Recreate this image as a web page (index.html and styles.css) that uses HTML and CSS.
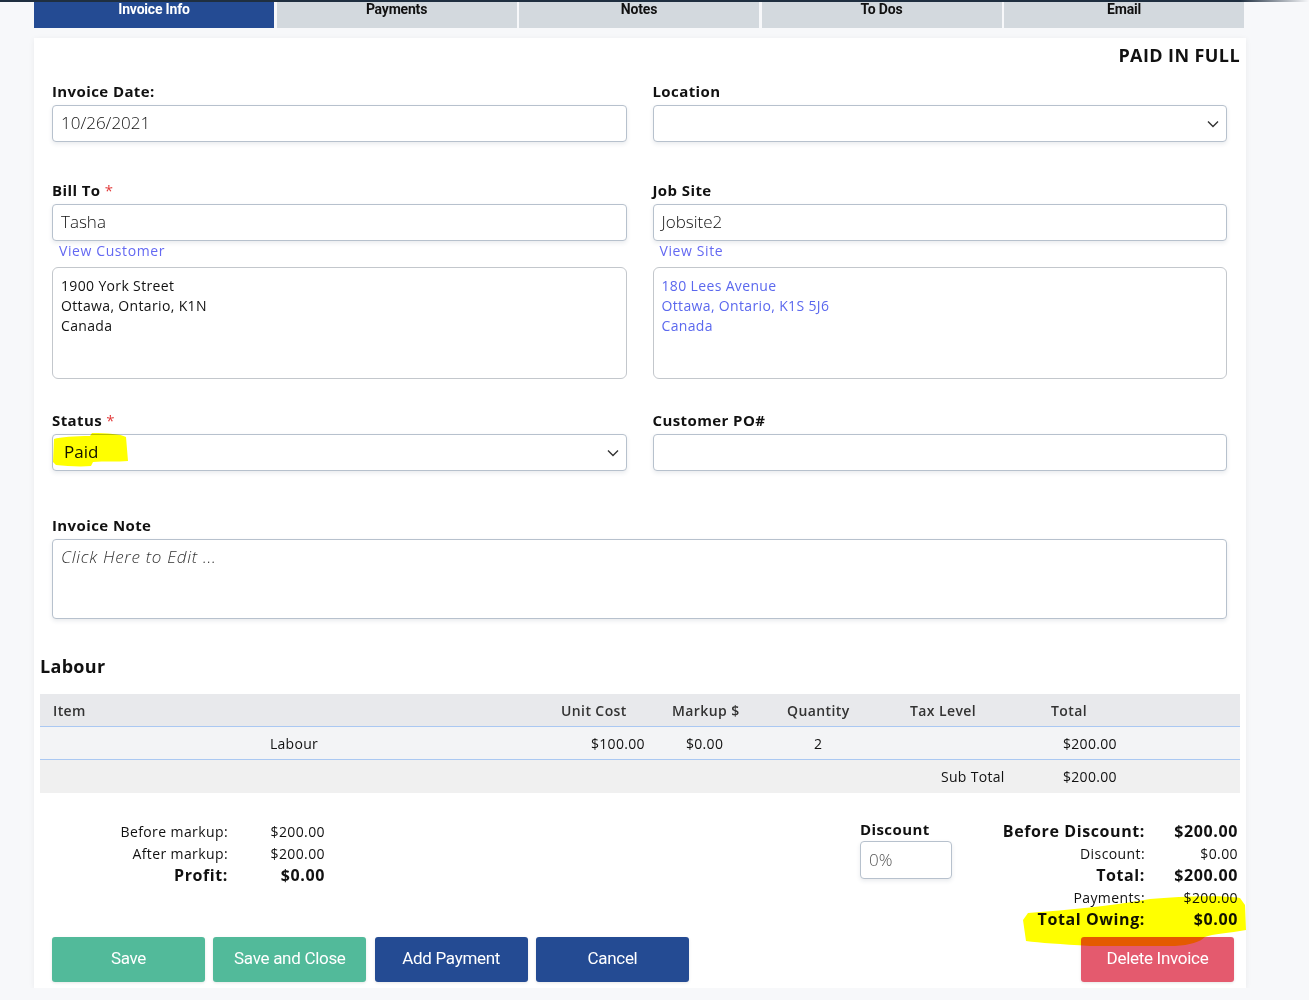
FILE: index.html
```html
<!DOCTYPE html>
<html>
<head>
<meta charset="utf-8">
<title>Invoice</title>
<link rel="stylesheet" href="styles.css">
</head>
<body>
<div class="topbar"></div>
<nav class="tabs">
  <div class="tab active">Invoice Info</div>
  <div class="tab">Payments</div>
  <div class="tab">Notes</div>
  <div class="tab">To Dos</div>
  <div class="tab">Email</div>
</nav>
<main class="card">
  <div class="paid">PAID IN FULL</div>
  <div class="form">
    <div class="row r1">
      <div class="field">
        <div class="lbl">Invoice Date:</div>
        <div class="input">10/26/2021</div>
      </div>
      <div class="field">
        <div class="lbl">Location</div>
        <div class="input select"><span></span><svg class="chev" width="12" height="8" viewBox="0 0 12 8"><path d="M1 1.5 L6 6.5 L11 1.5" fill="none" stroke="#333" stroke-width="1.4"/></svg></div>
      </div>
    </div>
    <div class="row r2">
      <div class="field">
        <div class="lbl">Bill To <span class="req">*</span></div>
        <div class="input">Tasha</div>
        <div class="link">View Customer</div>
        <div class="addr">1900 York Street<br>Ottawa, Ontario, K1N<br>Canada</div>
      </div>
      <div class="field">
        <div class="lbl">Job Site</div>
        <div class="input">Jobsite2</div>
        <div class="link">View Site</div>
        <div class="addr blue">180 Lees Avenue<br>Ottawa, Ontario, K1S 5J6<br>Canada</div>
      </div>
    </div>
    <div class="row r3">
      <div class="field">
        <div class="lbl">Status <span class="req">*</span></div>
        <div class="input select status"><span>Paid</span><svg class="chev" width="12" height="8" viewBox="0 0 12 8"><path d="M1 1.5 L6 6.5 L11 1.5" fill="none" stroke="#333" stroke-width="1.4"/></svg></div>
      </div>
      <div class="field">
        <div class="lbl">Customer PO#</div>
        <div class="input"></div>
      </div>
    </div>
    <div class="row single r4">
      <div class="field">
        <div class="lbl">Invoice Note</div>
        <div class="input note">Click Here to Edit ...</div>
      </div>
    </div>
  </div>

  <h2 class="section">Labour</h2>
  <div class="table">
    <div class="tr th">
      <div class="c">Item</div>
      <div class="c">Unit Cost</div>
      <div class="c">Markup $</div>
      <div class="c">Quantity</div>
      <div class="c">Tax Level</div>
      <div class="c">Total</div>
      <div class="c"></div>
    </div>
    <div class="tr td">
      <div class="c center">Labour</div>
      <div class="c p43">$100.00</div>
      <div class="c p27">$0.00</div>
      <div class="c p40">2</div>
      <div class="c"></div>
      <div class="c p25">$200.00</div>
      <div class="c"></div>
    </div>
    <div class="tr sub">
      <div class="c"></div>
      <div class="c"></div>
      <div class="c"></div>
      <div class="c"></div>
      <div class="c p44">Sub Total</div>
      <div class="c p25">$200.00</div>
      <div class="c"></div>
    </div>
  </div>

  <div class="summary">
    <div class="markup">
      <div>Before markup:</div><div>$200.00</div>
      <div>After markup:</div><div>$200.00</div>
      <div class="b">Profit:</div><div class="b">$0.00</div>
    </div>
    <div class="right">
      <div class="disc">
        <div class="disc-lbl">Discount</div>
        <div class="input disc-in">0%</div>
      </div>
      <div class="totals">
        <div class="b">Before Discount:</div><div class="b">$200.00</div>
        <div>Discount:</div><div>$0.00</div>
        <div class="b">Total:</div><div class="b">$200.00</div>
        <div>Payments:</div><div>$200.00</div>
        <div class="b">Total Owing:</div><div class="b">$0.00</div>
      </div>
    </div>
  </div>

  <div class="actions">
    <div class="btn green">Save</div>
    <div class="btn green">Save and Close</div>
    <div class="btn navy">Add Payment</div>
    <div class="btn navy">Cancel</div>
    <div class="btn red">Delete Invoice</div>
  </div>
</main>

<svg class="hl" width="1309" height="1000" viewBox="0 0 1309 1000">
  <path d="M54,439 C60,437 75,436 90,436 L92,433 C108,433 120,434 126,437 L128,461 C118,462 104,461 93,462 L91,466 C80,467 66,466 56,465 L53,462 Z" fill="#ffff00"/>
  <path d="M1028,913 C1070,910 1110,906 1150,899 C1180,896 1225,895 1240,898 L1245,905 L1246,930 C1230,933 1212,934 1205,937 C1200,942 1190,945 1175,946 L1090,946 C1060,944 1040,943 1026,941 L1023,920 Z" fill="#ffff00"/>
</svg>
</body>
</html>
```

FILE: styles.css
```css
* { box-sizing: border-box; margin: 0; padding: 0; }
body {
  background: #f7f8fa;
  font-family: "Open Sans", "DejaVu Sans", sans-serif;
  color: #111;
  width: 1309px;
}
.topbar {
  height: 2px;
  background: linear-gradient(90deg, #1f2f40 0, #1f2f40 1240px, #f7f8fa 1309px);
}
.tabs {
  display: grid;
  grid-template-columns: repeat(5, 1fr);
  column-gap: 2.5px;
  width: 1210px;
  margin-left: 34px;
  height: 26px;
}
.tab {
  background: #d3d9de;
  font-family: Roboto, "Liberation Sans", sans-serif;
  font-weight: 700;
  font-size: 14px;
  line-height: 14px;
  text-align: center;
  color: #111;
  letter-spacing: -0.2px;
}
.tab.active { background: #244b93; color: #fff; }
.card {
  margin: 10px 0 0 34px;
  width: 1212px;
  background: #fff;
  padding: 6px;
  box-shadow: 0 1px 6px rgba(0, 0, 0, 0.06);
}
.paid {
  text-align: right;
  font-weight: 700;
  font-size: 18px;
  line-height: 22px;
  letter-spacing: 0.4px;
}
.form { margin: 15px 13px 0 12px; }
.row {
  display: grid;
  grid-template-columns: 1fr 1fr;
  column-gap: 26px;
}
.row.single { grid-template-columns: 1fr; }
.r2 { margin-top: 38px; }
.r3 { margin-top: 31px; }
.r4 { margin-top: 44px; }
.lbl {
  font-size: 15px;
  font-weight: 700;
  line-height: 20px;
  margin-bottom: 4px;
  letter-spacing: 0.4px;
}
.req { color: #e23c3c; font-weight: 400; }
.input {
  height: 37px;
  border: 1px solid #b7c1cd;
  border-radius: 4px;
  box-shadow: 0 2px 4px rgba(40, 60, 90, 0.1);
  padding: 0 8px 2px;
  display: flex;
  align-items: center;
  font-size: 17px;
  font-weight: 300;
  color: #111;
  background: #fff;
}
.select { justify-content: space-between; padding-right: 7px; padding-bottom: 0; }
.select span { margin-bottom: 2px; }
.status { padding-left: 11px; font-weight: 400; }
.chev { display: block; }
.link {
  font-size: 14px;
  line-height: 20px;
  color: #6469f2;
  padding-left: 7px;
  letter-spacing: 0.6px;
}
.addr {
  margin-top: 6px;
  height: 112px;
  border: 1px solid #c3c7cc;
  border-radius: 6px;
  padding: 8px 8px;
  font-size: 14px;
  line-height: 20px;
  color: #111;
  letter-spacing: 0.35px;
}
.addr.blue { color: #5b68ee; }
.note {
  height: 80px;
  align-items: flex-start;
  padding-top: 5px;
  font-style: italic;
  line-height: 24px;
  color: #333;
  letter-spacing: 0.7px;
}
.section {
  margin-top: 35px;
  font-size: 18px;
  font-weight: 700;
  line-height: 24px;
  letter-spacing: 0.3px;
}
.table { margin-top: 16px; }
.tr {
  display: grid;
  grid-template-columns: 508px 111px 115px 123px 141px 102px 100px;
  height: 33px;
  align-items: center;
  font-size: 14px;
  letter-spacing: 0.3px;
}
.th { background: #e8e9ec; border-bottom: 1px solid #aac8f2; font-weight: 600; color: #333; letter-spacing: 0.4px; }
.th .c { padding-left: 13px; }
.td { background: #f3f4f6; border-bottom: 1px solid #aac8f2; }
.sub { background: #f0f0f0; }
.center { text-align: center; }
.p43 { padding-left: 43px; }
.p27 { padding-left: 27px; }
.p40 { padding-left: 40px; }
.p25 { padding-left: 25px; }
.p44 { padding-left: 44px; }
.summary {
  display: flex;
  align-items: flex-start;
  margin-top: 27px;
  padding: 0 2px 0 12px;
}
.markup {
  display: grid;
  grid-template-columns: 176px 97px;
  grid-auto-rows: 22px;
  align-items: center;
  text-align: right;
  font-size: 14px;
  letter-spacing: 0.4px;
}
.markup .b, .totals .b { font-weight: 700; font-size: 16px; letter-spacing: 0.6px; }
.right { margin-left: auto; display: flex; align-items: flex-start; }
.disc { width: 92px; }
.disc-lbl {
  font-size: 15px;
  font-weight: 700;
  line-height: 20px;
  margin-top: -1px;
  margin-bottom: 2px;
  letter-spacing: 0.4px;
}
.disc-in { height: 38px; color: #555; }
.totals {
  display: grid;
  grid-template-columns: 193px 93px;
  grid-auto-rows: 22px;
  align-items: center;
  text-align: right;
  font-size: 14px;
  letter-spacing: 0.4px;
}
.actions {
  display: flex;
  gap: 8.33px;
  margin-top: 7px;
  padding: 0 6px 0 12px;
}
.btn {
  width: 153px;
  height: 45px;
  border-radius: 3px;
  color: #fff;
  font-family: Roboto, "Liberation Sans", sans-serif;
  font-size: 17px;
  letter-spacing: -0.3px;
  display: flex;
  align-items: center;
  justify-content: center;
  padding-bottom: 3px;
  box-shadow: 0 1px 3px rgba(0, 0, 0, 0.1);
}
.green { background: #52ba9a; }
.navy { background: #244b93; }
.red { background: #e45a6e; margin-left: auto; }
.hl {
  position: absolute;
  top: 0;
  left: 0;
  mix-blend-mode: multiply;
  pointer-events: none;
}
```
